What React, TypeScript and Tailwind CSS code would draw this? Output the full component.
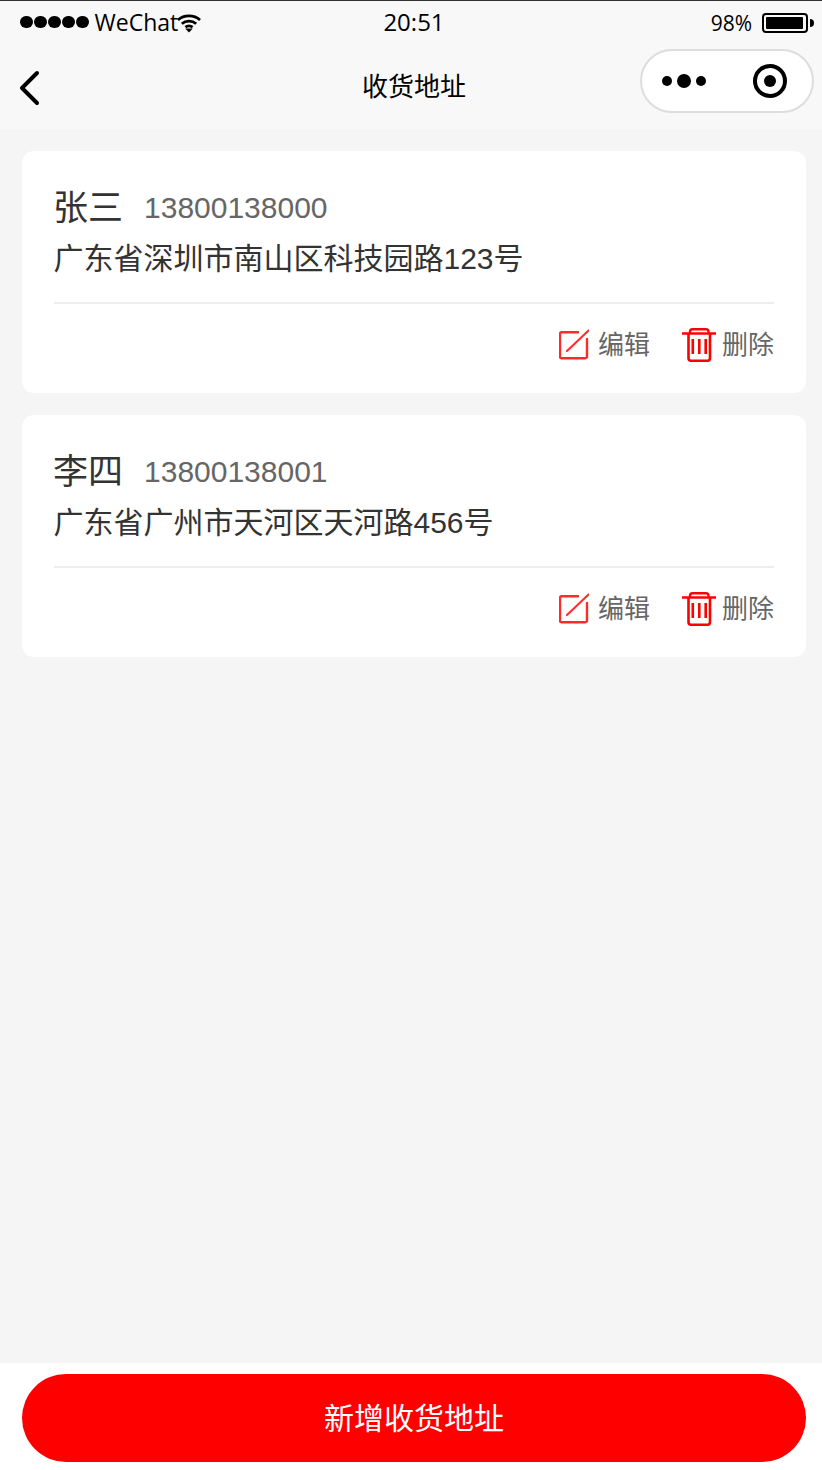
import React from "react";

const cjk = "font-['Liberation_Sans','Noto_Sans_CJK_SC',sans-serif]";

const addresses = [
  { name: "张三", phone: "13800138000", address: "广东省深圳市南山区科技园路123号" },
  { name: "李四", phone: "13800138001", address: "广东省广州市天河区天河路456号" },
];

function WifiIcon() {
  return (
    <svg width="24" height="20" viewBox="0 0 24 20" fill="none" stroke="#000" strokeWidth="2.8">
      <path d="M1 7C7 1.500 17 1.500 23 7" />
      <path d="M4.800 10.800C9 7.100 15 7.100 19.200 10.800" />
      <path d="M8.400 14.200C10.500 12.600 13.500 12.600 15.600 14.200" />
      <path d="M8.200 15.600h7.600L12 19.500z" fill="#000" stroke="none" />
    </svg>
  );
}

function EditIcon() {
  return (
    <svg width="30" height="32" viewBox="0 0 30 32" fill="none" stroke="#ff2a2a" strokeWidth="2.4">
      <path d="M19 3.200H2.500a1.500 1.500 0 0 0-1.500 1.500v23a1.500 1.500 0 0 0 1.500 1.500h24a1.500 1.500 0 0 0 1.500-1.500V10" strokeLinecap="round" />
      <path d="M8 22L29.500 1.500" strokeWidth="2" strokeLinecap="round" />
    </svg>
  );
}

function TrashIcon() {
  return (
    <svg width="34" height="34" viewBox="0 0 34 34" fill="none" stroke="#ff0000" strokeWidth="2.4">
      <path d="M0 5.500h34" />
      <path d="M8 5V3.700A2.500 2.500 0 0 1 10.500 1.200h13.500A2.500 2.500 0 0 1 26.500 3.700V5" />
      <path d="M6.500 5.500v24.500a2.800 2.800 0 0 0 2.800 2.800h15.900a2.800 2.800 0 0 0 2.800-2.800V5.500" strokeWidth="2.600" />
      <path d="M10.800 11v15M17.300 11v15M23.700 11v15" strokeWidth="2.600" />
    </svg>
  );
}

function AddressCard({ name, phone, address }: { name: string; phone: string; address: string }) {
  return (
    <div className="bg-white rounded-[12px] px-[32px] pt-[32px]">
      <div className="flex items-center h-[50px] -ml-[1px]">
        <span className="text-[35px] text-[#333]">{name}</span>
        <span className="text-[30px] text-[#666] ml-[21px] pb-[2px]">{phone}</span>
      </div>
      <div className="text-[30px] leading-[50px] text-[#333] mt-[1px] -ml-[0.5px]">{address}</div>
      <div className="h-[2px] bg-[#eeeeee] mt-[18px]" />
      <div className="flex items-center justify-end h-[89px] pb-[7px] text-[26px] text-[#666]">
        <EditIcon />
        <span className="ml-[9px] mt-[1px]">编辑</span>
        <div className="ml-[32px] -mt-[1px]">
          <TrashIcon />
        </div>
        <span className="ml-[6px] mt-[1px]">删除</span>
      </div>
    </div>
  );
}

export default function App() {
  return (
    <div className={`w-[822px] h-[1470px] overflow-hidden bg-[#f5f5f5] ${cjk}`}>
      <div className="w-[828px] h-full flex flex-col">
        {/* Status bar + nav */}
        <div className="bg-[#f8f8f8] border-t border-[#333] h-[129px]">
          <div className="h-[42px] grid grid-cols-[1fr_auto_1fr] items-center font-['Open_Sans',sans-serif] text-black">
            <div className="flex items-center pl-[20px]">
              <div className="flex gap-[1.5px]">
                {[0, 1, 2, 3, 4].map((i) => (
                  <span key={i} className="w-[12.500px] h-[12.500px] rounded-full bg-black" />
                ))}
              </div>
              <span className="text-[23px] ml-[6px] leading-none">WeChat</span>
              <div className="-ml-[1px] mt-[2px]">
                <WifiIcon />
              </div>
            </div>
            <span className="text-[24px] leading-none">20:51</span>
            <div className="flex items-center justify-end pr-[14px]">
              <span className="text-[21px] leading-none mr-[10px] mt-[2px]">98%</span>
              <div className="flex items-center mt-[2px]">
                <div className="w-[46px] h-[20px] border-2 border-black rounded-[4px] p-[2px]">
                  <div className="h-full w-[98%] bg-black rounded-[1px]" />
                </div>
                <span className="w-[4px] h-[8px] bg-black rounded-r-full ml-[2px]" />
              </div>
            </div>
          </div>
          <div className="grid grid-cols-[1fr_auto_1fr] items-center h-[75px]">
            <div className="pl-[18px] pt-[15px]">
              <svg width="24" height="38" viewBox="0 0 24 38" fill="none" stroke="#000" strokeWidth="4" strokeLinecap="round" strokeLinejoin="round">
                <path d="M19 4L4 19l15 15" />
              </svg>
            </div>
            <span className="text-[26px] text-black pt-[14px]">收货地址</span>
            <div className="flex justify-end pr-[14px] pt-[1px]">
              <div className="w-[174px] h-[64px] bg-white border-2 border-[#dddddd] rounded-full flex items-center pl-[20px]">
                <div className="flex items-center gap-[5px]">
                  <span className="w-[10px] h-[10px] rounded-full bg-black" />
                  <span className="w-[14px] h-[14px] rounded-full bg-black" />
                  <span className="w-[10px] h-[10px] rounded-full bg-black" />
                </div>
                <div className="ml-[47px] w-[34px] h-[34px] rounded-full border-[4px] border-black flex items-center justify-center">
                  <span className="w-[12px] h-[12px] rounded-full bg-black" />
                </div>
              </div>
            </div>
          </div>
        </div>

        {/* List */}
        <div className="flex flex-col gap-[22px] px-[22px] pt-[22px]">
          {addresses.map((a) => (
            <AddressCard key={a.phone} {...a} />
          ))}
        </div>

        {/* Bottom action */}
        <div className="mt-auto bg-white h-[107px] px-[22px] pt-[11px]">
          <button className="w-full h-[88px] rounded-full bg-[#ff0000] text-white text-[30px]">新增收货地址</button>
        </div>
      </div>
    </div>
  );
}
